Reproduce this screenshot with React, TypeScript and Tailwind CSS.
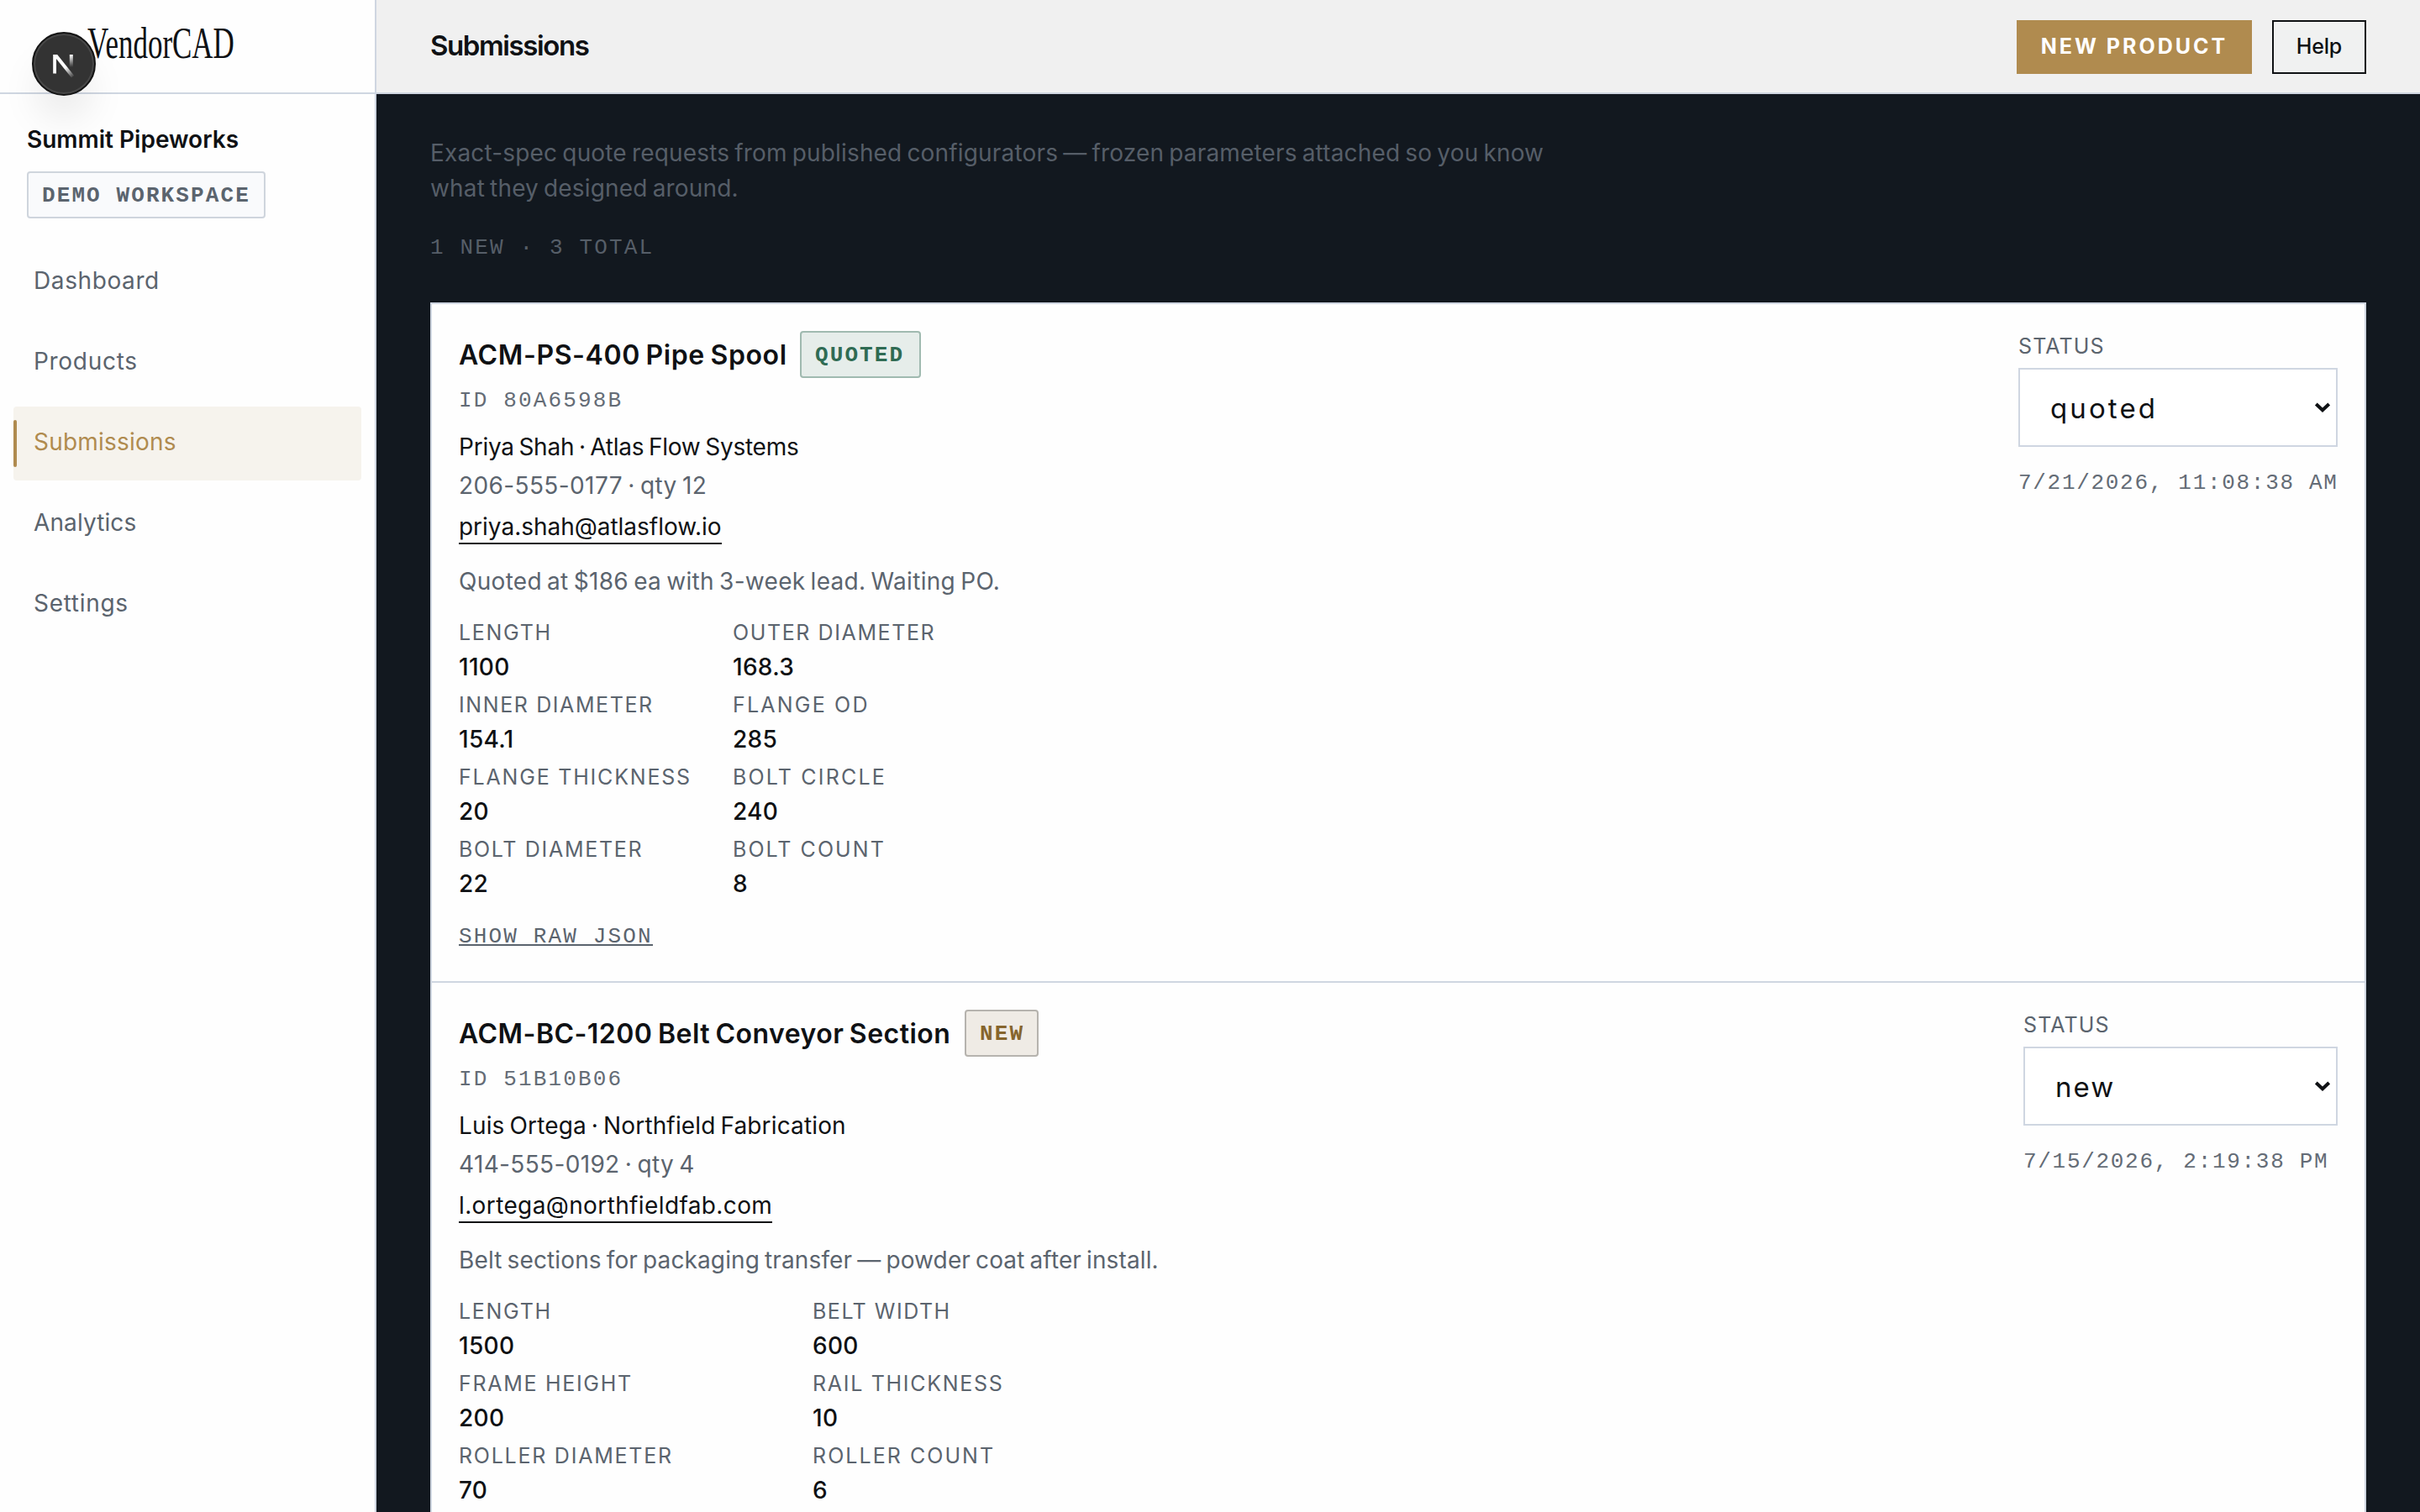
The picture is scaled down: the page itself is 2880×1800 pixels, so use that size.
import clsx from "clsx";

type Param = { label: string; value: string; className?: string };

type Submission = {
  id: string;
  title: string;
  titleClass: string;
  status: "quoted" | "new";
  contact: string;
  contactClass: string;
  phone: string;
  phoneClass: string;
  email: string;
  emailClass: string;
  note: string;
  noteClass: string;
  params: Param[];
  gridClass: string;
  asideClass: string;
  selectClass: string;
  date: string;
  hasRaw: boolean;
};

const NAV = [
  { label: "Dashboard", className: "tracking-[0.6px]" },
  { label: "Products", className: "tracking-[0.7px]" },
  { label: "Submissions", className: "tracking-[0.2px]" },
  { label: "Analytics", className: "tracking-[0.1px]" },
  { label: "Settings", className: "tracking-[0.7px]" },
];

const SUBMISSIONS: Submission[] = [
  {
    id: "80A6598B",
    title: "ACM-PS-400 Pipe Spool",
    titleClass: "tracking-[0.6px] w-[390px]",
    status: "quoted",
    contact: "Priya Shah · Atlas Flow Systems",
    contactClass: "tracking-[-0.24px]",
    phone: "206-555-0177 · qty 12",
    phoneClass: "tracking-[0.39px]",
    email: "priya.shah@atlasflow.io",
    emailClass: "tracking-[-0.02px]",
    note: "Quoted at $186 ea with 3-week lead. Waiting PO.",
    noteClass: "tracking-[0.3px]",
    params: [
      { label: "Length", value: "1100", className: "tracking-[1.7px]" },
      { label: "Outer diameter", value: "168.3" },
      { label: "Inner diameter", value: "154.1" },
      { label: "Flange OD", value: "285", className: "tracking-[2.2px]" },
      { label: "Flange thickness", value: "20", className: "tracking-[1.8px]" },
      { label: "Bolt circle", value: "240", className: "tracking-[2.2px]" },
      { label: "Bolt diameter", value: "22", className: "tracking-[1.7px]" },
      { label: "Bolt count", value: "8", className: "tracking-[2.05px]" },
    ],
    gridClass: "grid-cols-[326px_auto]",
    asideClass: "w-[380px]",
    selectClass: "tracking-[3.1px]",
    date: "7/21/2026, 11:08:38 AM",
    hasRaw: true,
  },
  {
    id: "51B10B06",
    title: "ACM-BC-1200 Belt Conveyor Section",
    titleClass: "tracking-[0.47px] w-[586px]",
    status: "new",
    contact: "Luis Ortega · Northfield Fabrication",
    contactClass: "tracking-[0.14px]",
    phone: "414-555-0192 · qty 4",
    phoneClass: "tracking-[0.35px]",
    email: "l.ortega@northfieldfab.com",
    emailClass: "tracking-[0.38px]",
    note: "Belt sections for packaging transfer — powder coat after install.",
    noteClass: "tracking-[0.13px]",
    params: [
      { label: "Length", value: "1500", className: "tracking-[1.7px]" },
      { label: "Belt width", value: "600", className: "tracking-[1.5px]" },
      { label: "Frame height", value: "200", className: "tracking-[1.7px]" },
      { label: "Rail thickness", value: "10", className: "tracking-[1.7px]" },
      { label: "Roller diameter", value: "70", className: "tracking-[1.75px]" },
      { label: "Roller count", value: "6", className: "tracking-[2.05px]" },
    ],
    gridClass: "grid-cols-[421px_auto]",
    asideClass: "w-[374px]",
    selectClass: "tracking-[2px]",
    date: "7/15/2026, 2:19:38 PM",
    hasRaw: false,
  },
];

const MONO = "font-['Liberation_Mono',monospace] text-[26px] whitespace-pre uppercase";

function DevBadge() {
  return (
    <div className="absolute left-[38px] top-[38px] z-10 flex size-[76px] items-center justify-center rounded-full border-2 border-[#141414] bg-[#333333] shadow-[inset_0_0_0_2px_#484848,0_32px_48px_-8px_rgba(0,0,0,0.1)]">
      <svg width="72" height="72" viewBox="0 0 72 72" fill="none">
        <defs>
          <linearGradient id="diag" x1="38" y1="40" x2="48" y2="52" gradientUnits="userSpaceOnUse">
            <stop stopColor="white" />
            <stop offset="1" stopColor="white" stopOpacity="0" />
          </linearGradient>
          <linearGradient id="stem" x1="45" y1="25" x2="45" y2="40" gradientUnits="userSpaceOnUse">
            <stop stopColor="white" />
            <stop offset="1" stopColor="white" stopOpacity="0" />
          </linearGradient>
        </defs>
        <path d="M23.2 25H28.2L48.2 50L45 52.4L27 30V47.5H23.2Z" fill="url(#diag)" />
        <path d="M44.8 25V40" stroke="url(#stem)" strokeWidth="4" />
      </svg>
    </div>
  );
}

function Sidebar() {
  return (
    <aside className="relative w-[448px] shrink-0 border-r-2 border-[#cfd6e1] bg-[#fefefe]">
      <DevBadge />
      <div className="h-28 border-b-2 border-[#cfd6e1] pl-[104px] pt-[19px]">
        <span className="inline-block origin-left scale-x-[0.66] font-['Liberation_Serif',serif] text-[53px] leading-[64px]">
          VendorCAD
        </span>
      </div>
      <div className="px-8 pt-[33px]">
        <p className="text-[28px] font-semibold leading-[42px]">Summit Pipeworks</p>
        <div className="mt-[17px] h-14 w-[284px] rounded border-2 border-[#cfd5dd] bg-[#f9fafc] pl-4">
          <span className={clsx(MONO, "block pt-px font-bold leading-[52px] tracking-[2.1px] text-[#5b646e]")}>
            Demo workspace
          </span>
        </div>
      </div>
      <nav className="flex flex-col gap-2 px-4 pt-8">
        {NAV.map((item) => {
          const active = item.label === "Submissions";
          return (
            <a
              key={item.label}
              className={clsx(
                "flex h-[88px] w-[414px] items-center rounded",
                active ? "bg-[#f6f3ed] text-[#b08b4f]" : "text-[#5b646e]",
              )}
            >
              <span className={clsx("h-14 w-1 rounded-full", active && "bg-[#b08b4f]")} />
              <span className={clsx("pb-[5px] pl-5 text-[28px] leading-[42px]", item.className)}>{item.label}</span>
            </a>
          );
        })}
      </nav>
    </aside>
  );
}

function StatusBadge({ status }: { status: Submission["status"] }) {
  return (
    <span
      className={clsx(
        MONO,
        "h-14 rounded border-2 pl-4 pt-px font-bold leading-[52px] tracking-[2.1px]",
        status === "quoted"
          ? "w-36 border-[#a0bab0] bg-[#e6edea] text-[#2f6b53]"
          : "w-[88px] border-[#b6b3ae] bg-[#efebe5] text-[#86652d]",
      )}
    >
      {status}
    </span>
  );
}

function SubmissionRow({ item }: { item: Submission }) {
  return (
    <article className="flex justify-between border-b-2 border-[#cfd6e1] px-8 pb-[42px] pt-8">
      <div className="flex flex-col items-start whitespace-nowrap text-[28px] leading-[42px] [word-spacing:-2px]">
        <div className="flex h-14 items-center gap-4">
          <h2 className={clsx("pt-0.5 text-[32px] font-semibold", item.titleClass)}>{item.title}</h2>
          <StatusBadge status={item.status} />
        </div>
        <p className={clsx(MONO, "mt-1.5 leading-[43px] tracking-[2.15px] text-[#646c76] [word-spacing:0]")}>
          {`ID ${item.id}`}
        </p>
        <p className={clsx("mt-3", item.contactClass)}>{item.contact}</p>
        <p className={clsx("mt-1 text-[#5b646e]", item.phoneClass)}>{item.phone}</p>
        <a className={clsx("mt-[9px] border-b-2 border-[#0f1114] leading-[38px]", item.emailClass)}>{item.email}</a>
        <p className={clsx("mt-[23px] text-[#5b646e]", item.noteClass)}>{item.note}</p>
        <dl className={clsx("mt-[22px] grid gap-y-1.5 [word-spacing:0]", item.gridClass)}>
          {item.params.map((p) => (
            <div key={p.label}>
              <dt className={clsx("text-[25px] uppercase leading-9 text-[#5b646e]", p.className ?? "tracking-[1.6px]")}>
                {p.label}
              </dt>
              <dd className="mt-0.5 font-medium tracking-[0.3px]">{p.value}</dd>
            </div>
          ))}
        </dl>
        {item.hasRaw && (
          <button
            className={clsx(
              MONO,
              "mt-[33px] border-b-2 border-[#5b646e] leading-[18px] tracking-[2.15px] text-[#5b646e] [word-spacing:0]",
            )}
          >
            Show raw JSON
          </button>
        )}
      </div>

      <div className={clsx("flex flex-col", item.asideClass)}>
        <label className="text-[25px] uppercase leading-9 tracking-[1.1px] text-[#5b646e]">Status</label>
        <div className="relative mt-2">
          <select
            defaultValue={item.status}
            className={clsx(
              "h-[94px] w-full appearance-none border-2 border-[#cfd6e1] bg-white pl-9 pt-[3px] text-[33px]",
              item.selectClass,
            )}
          >
            <option value="quoted">quoted</option>
            <option value="new">new</option>
          </select>
          <svg className="absolute right-2 top-10" width="20" height="14" viewBox="0 0 20 14" fill="none">
            <path d="M2.3 3L10 10.2L17.7 3" stroke="#0f1114" strokeWidth="4" />
          </svg>
        </div>
        <time className={clsx(MONO, "mt-[22px] leading-[43px] tracking-[1.7px] text-[#646c76]")}>{item.date}</time>
      </div>
    </article>
  );
}

export default function App() {
  return (
    <div className="flex h-[1800px] w-[2880px] overflow-hidden bg-[#12181f] font-['Inter',sans-serif] text-[#0f1114]">
      <Sidebar />
      <main className="flex flex-1 flex-col">
        <header className="flex h-28 shrink-0 items-center justify-between border-b-2 border-[#cfd6e1] bg-[#f0f0f0] px-16">
          <h1 className="text-[33px] font-semibold tracking-[-1.4px]">Submissions</h1>
          <div className="flex gap-6 pt-0.5">
            <button className="h-16 w-[280px] bg-[#b08b4f] text-[25px] font-bold tracking-[3px] text-white">
              NEW PRODUCT
            </button>
            <button className="h-16 w-28 border-2 border-[#0f1114] bg-[#f0f1f1] text-[25px] font-medium tracking-[-0.2px]">
              Help
            </button>
          </div>
        </header>

        <section className="px-16 pt-[49px]">
          <p className="whitespace-nowrap text-[28px] leading-[42px] tracking-[0.17px] text-[#565e68] [word-spacing:-2px]">
            Exact-spec quote requests from published configurators — frozen parameters attached so you know
            <br />
            what they designed around.
          </p>
          <p className={clsx(MONO, "mt-[29px] leading-[43px] tracking-[2.15px] text-[#565e68]")}>1 new · 3 total</p>
          <div className="mt-[43px] border-2 border-[#cfd6e1] bg-[#fefefe]">
            {SUBMISSIONS.map((item) => (
              <SubmissionRow key={item.id} item={item} />
            ))}
          </div>
        </section>
      </main>
    </div>
  );
}
